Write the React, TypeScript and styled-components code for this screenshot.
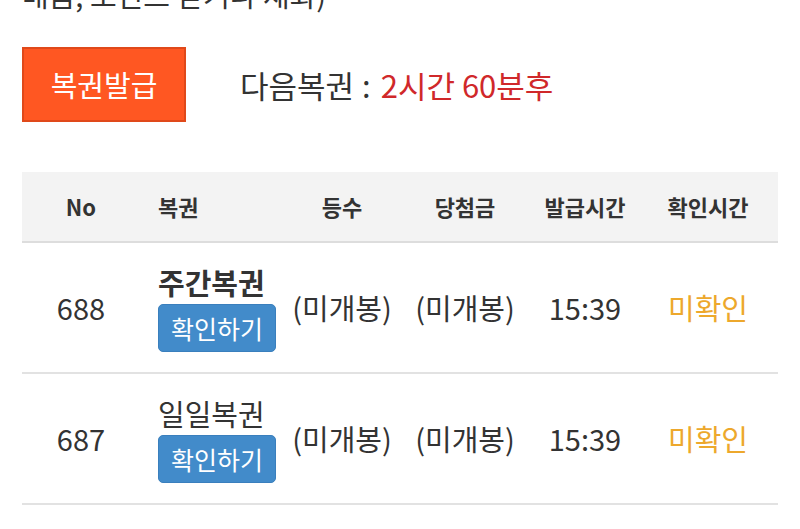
import React from 'react';
import styled, { createGlobalStyle } from 'styled-components';

const GlobalStyle = createGlobalStyle`
  html, body {
    margin: 0;
    padding: 0;
    background: #ffffff;
    overflow: hidden;
  }
  body {
    font-family: "Noto Sans CJK KR", Roboto, sans-serif;
    color: #333333;
  }
`;

const Page = styled.div`
  width: 800px;
  height: 529px;
  padding: 0 22px;
  box-sizing: border-box;
  overflow: hidden;
`;

const Notice = styled.p`
  margin: -26px 0 0;
  font-size: 29px;
  line-height: 40px;
  color: #333333;
  white-space: nowrap;
`;

const IssueBar = styled.div`
  display: flex;
  align-items: center;
  gap: 54px;
  margin-top: 33px;
`;

const IssueButton = styled.button`
  width: 164px;
  height: 75px;
  background: #ff5722;
  border: 2px solid #e0491a;
  color: #ffffff;
  font-family: "Noto Sans CJK KR", Roboto, sans-serif;
  font-size: 29px;
  line-height: 1;
  padding: 0;
  box-sizing: border-box;
`;

const NextInfo = styled.div`
  font-size: 31px;
  line-height: 1.2;
  color: #333333;
  display: flex;
  align-items: center;
`;

const Colon = styled.span`
  margin: 0 10px 0 8px;
`;

const Remaining = styled.span`
  color: #d0282a;
`;

const Table = styled.div`
  margin-top: 50px;
  width: 756px;
`;

const Row = styled.div<{ head?: boolean }>`
  display: grid;
  grid-template-columns: 118px 146px 112px 134px 106px 140px;
  align-items: center;
  height: ${({ head }) => (head ? '69px' : '129px')};
  background: ${({ head }) => (head ? '#f3f3f3' : '#ffffff')};
  border-bottom: 2px solid ${({ head }) => (head ? '#dddddd' : '#e2e2e2')};
  font-size: ${({ head }) => (head ? '22px' : '29px')};
  font-weight: ${({ head }) => (head ? 700 : 400)};
  line-height: 1.3;
`;

const Cell = styled.div<{ left?: boolean; tone?: 'warn' }>`
  text-align: ${({ left }) => (left ? 'left' : 'center')};
  padding-left: ${({ left }) => (left ? '18px' : '0')};
  color: ${({ tone }) => (tone === 'warn' ? '#eda82c' : '#333333')};
  white-space: nowrap;
`;

const TicketName = styled.div<{ bold?: boolean }>`
  font-weight: ${({ bold }) => (bold ? 700 : 400)};
  line-height: 38px;
`;

const CheckButton = styled.button`
  margin-top: 3px;
  width: 118px;
  height: 48px;
  background: #428bca;
  border: 1px solid #3a7fbd;
  border-radius: 5px;
  color: #ffffff;
  font-family: "Noto Sans CJK KR", Roboto, sans-serif;
  font-size: 25px;
  line-height: 1;
  padding: 0;
  display: block;
`;

type Ticket = {
  no: number;
  name: string;
  weekly?: boolean;
  rank: string;
  prize: string;
  issued: string;
  checked: string;
};

const tickets: Ticket[] = [
  { no: 688, name: '주간복권', weekly: true, rank: '(미개봉)', prize: '(미개봉)', issued: '15:39', checked: '미확인' },
  { no: 687, name: '일일복권', rank: '(미개봉)', prize: '(미개봉)', issued: '15:39', checked: '미확인' },
];

export default function App() {
  return (
    <>
      <GlobalStyle />
      <Page>
        <Notice>배움, 포인트 받거나 재화)</Notice>
        <IssueBar>
          <IssueButton>복권발급</IssueButton>
          <NextInfo>
            다음복권<Colon>:</Colon>
            <Remaining>2시간 60분후</Remaining>
          </NextInfo>
        </IssueBar>
        <Table>
          <Row head>
            <Cell>No</Cell>
            <Cell left>복권</Cell>
            <Cell>등수</Cell>
            <Cell>당첨금</Cell>
            <Cell>발급시간</Cell>
            <Cell>확인시간</Cell>
          </Row>
          {tickets.map((t) => (
            <Row key={t.no}>
              <Cell>{t.no}</Cell>
              <Cell left>
                <TicketName bold={t.weekly}>{t.name}</TicketName>
                <CheckButton>확인하기</CheckButton>
              </Cell>
              <Cell>{t.rank}</Cell>
              <Cell>{t.prize}</Cell>
              <Cell>{t.issued}</Cell>
              <Cell tone="warn">{t.checked}</Cell>
            </Row>
          ))}
        </Table>
      </Page>
    </>
  );
}
